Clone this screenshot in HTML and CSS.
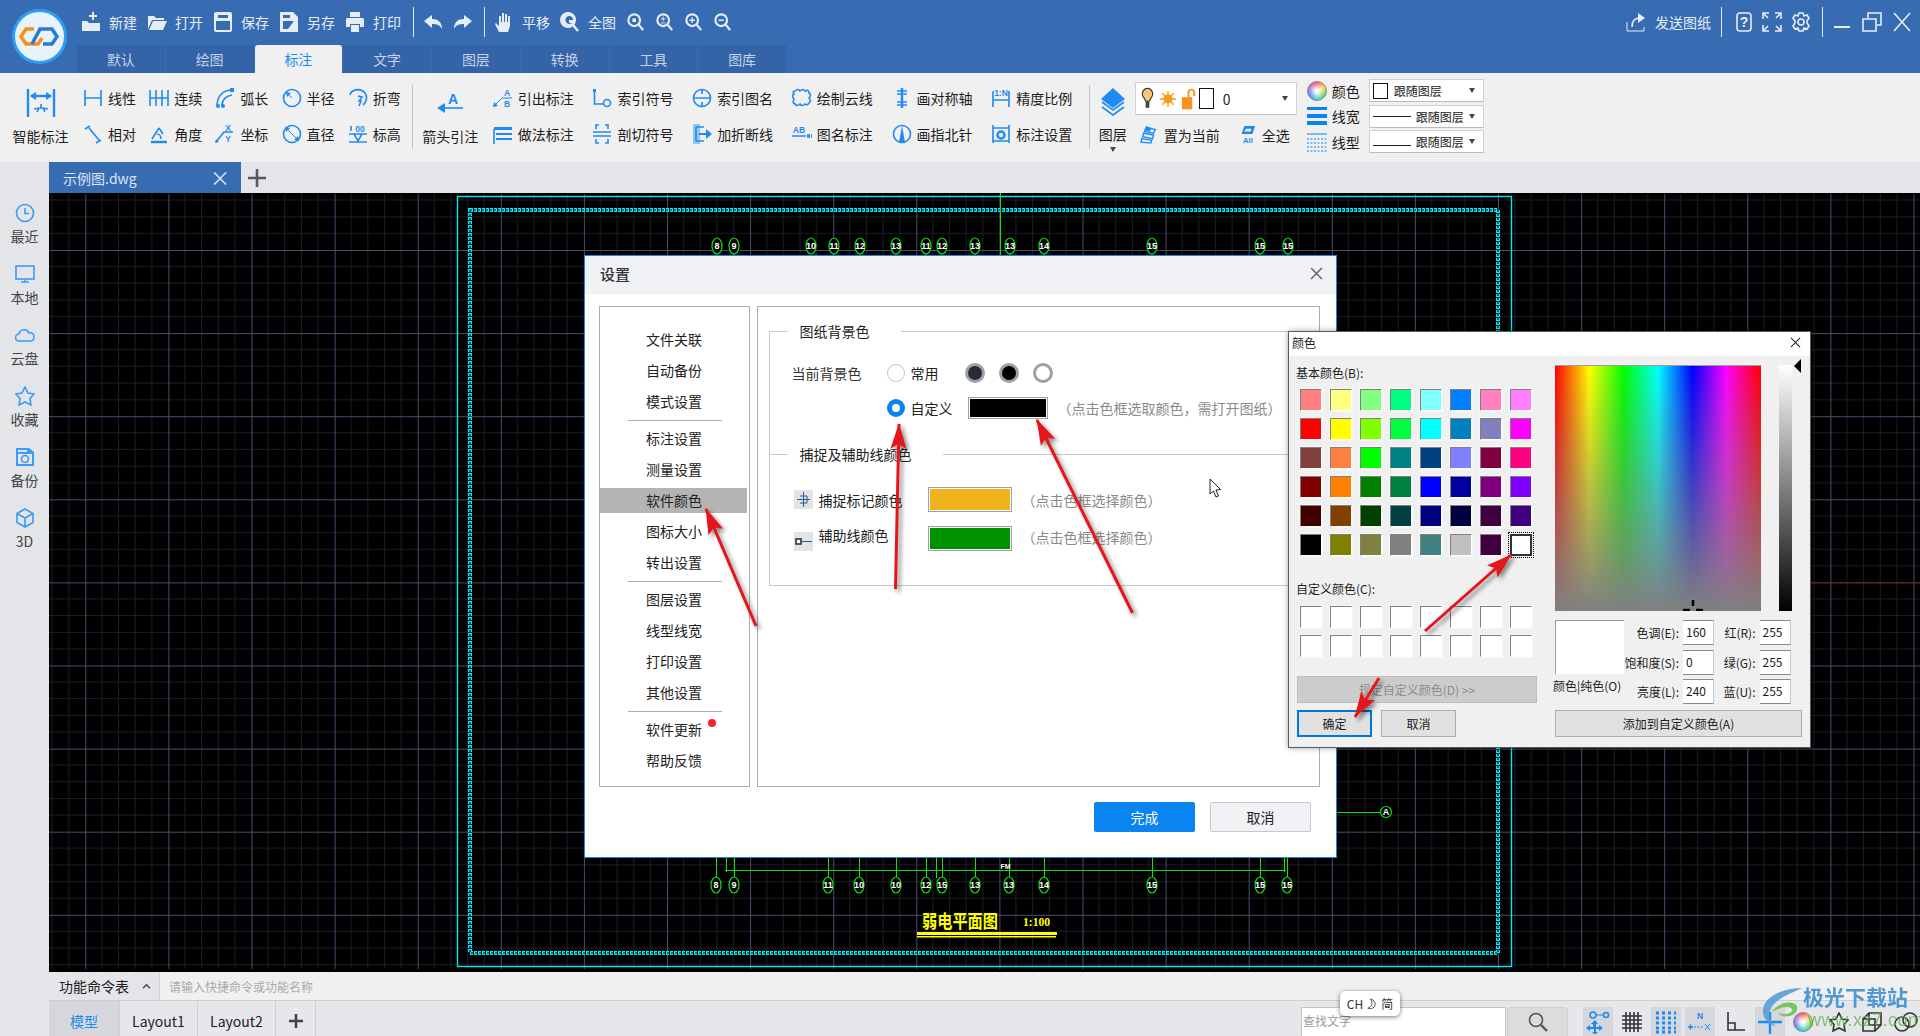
FILE: index.html
```html
<!DOCTYPE html>
<html lang="zh-CN">
<head>
<meta charset="utf-8">
<title>迅捷CAD 设置</title>
<link rel="stylesheet" href="styles.css">
</head>
<body>
<svg class="defs" width="0" height="0" aria-hidden="true">
<defs>
<symbol id="h-new" viewBox="0 0 20 20"><path class="f" d="M1 9h5l2 2h11v8H1z"/><path class="f" d="M8 3h3V0h2v3h3v2h-3v3h-2V5H8z"/></symbol>
<symbol id="h-open" viewBox="0 0 20 20"><path class="f" d="M1 4h6l2 2h8v2H5L1 17z"/><path class="f" d="M6 9h14l-4 9H2z"/></symbol>
<symbol id="h-save" viewBox="0 0 20 20"><path class="f" fill-rule="evenodd" d="M3 0h14a2 2 0 0 1 2 2v16a2 2 0 0 1-2 2H3a2 2 0 0 1-2-2V2a2 2 0 0 1 2-2zM3 9v9h14V9zM5 3v3h10V3z"/></symbol>
<symbol id="h-saveas" viewBox="0 0 20 20"><path class="f" fill-rule="evenodd" d="M1 0h13l5 5v15H1zM4 3v3h7V3zM4 9v8h5l6-8z"/><path class="f" d="M16 9l3 2-7 8h-3z"/></symbol>
<symbol id="h-print" viewBox="0 0 20 20"><path class="f" d="M5 0h10v5H5z"/><path class="f" fill-rule="evenodd" d="M2 6h16a2 2 0 0 1 1 2v7h-4v-3H5v3H1V8a2 2 0 0 1 1-2z"/><path class="f" d="M6 13h8v7H6z"/></symbol>
<symbol id="h-undo" viewBox="0 0 20 20"><path class="f" d="M9 3v4c6 0 10 3 10 10-2-4-5-5-10-5v4L1 9z"/></symbol>
<symbol id="h-redo" viewBox="0 0 20 20"><path class="f" d="M11 3v4C5 7 1 10 1 17c2-4 5-5 10-5v4l8-7z"/></symbol>
<symbol id="h-hand" viewBox="0 0 20 20"><path class="f" d="M5 20l-4-8 1-1 3 3V4h2v6h1V1h2v9h1V2h2v8h1V4h2v10l-2 6z"/></symbol>
<symbol id="h-all" viewBox="0 0 20 20"><path class="f" fill-rule="evenodd" d="M8 0a8 8 0 1 1 0 16A8 8 0 0 1 8 0zm1 4a4 4 0 1 0 3 7h-3V8h4a4 4 0 0 0-4-4z"/><path class="s3" d="M13 13l5 6"/></symbol>
<symbol id="h-zw" viewBox="0 0 20 20"><circle class="s3" cx="8" cy="8" r="6.5"/><rect class="f" x="6" y="6" width="4" height="4"/><path class="s3" d="M13 13l5 6"/></symbol>
<symbol id="h-zpm" viewBox="0 0 20 20"><circle class="s3" cx="8" cy="8" r="6.5"/><path class="s1" d="M5.500 6.500h5M8 4v5M5.500 11h5"/><path class="s3" d="M13 13l5 6"/></symbol>
<symbol id="h-zp" viewBox="0 0 20 20"><circle class="s3" cx="8" cy="8" r="6.500"/><path class="s2" d="M5 8h6M8 5v6"/><path class="s3" d="M13 13l5 6"/></symbol>
<symbol id="h-zm" viewBox="0 0 20 20"><circle class="s3" cx="8" cy="8" r="6.500"/><path class="s2" d="M5 8h6"/><path class="s3" d="M13 13l5 6"/></symbol>
<symbol id="h-send" viewBox="0 0 20 20"><path class="s1" d="M1 10v9h17v-4"/><path class="s2" d="M6 15c0-6 3-9 8-9"/><path class="f" d="M12 1l7 5-7 5z"/></symbol>
<symbol id="h-help" viewBox="0 0 20 20"><rect class="s2" x="3" y="1" width="14" height="18" rx="3"/><text class="gt" x="10" y="15">?</text></symbol>
<symbol id="h-full" viewBox="0 0 20 20"><path class="s2" d="M1 7V1h6M13 1h6v6M19 13v6h-6M7 19H1v-6M2 2l4 4M18 2l-4 4M18 18l-4-4M2 18l4-4"/></symbol>
<symbol id="h-gear" viewBox="0 0 20 20"><circle class="s2" cx="10" cy="10" r="3"/><path class="s2" d="M8 1h4l1 3 3-1 2 3-2 3v2l2 3-2 3-3-1-1 3H8l-1-3-3 1-2-3 2-3V9L2 6l2-3 3 1z"/></symbol>

<symbol id="t-smart" viewBox="0 0 30 30"><path class="s3" d="M2 1v28M28 1v28"/><path class="s3" d="M5 8h20"/><path class="f" d="M4 8l6-4v8zM26 8l-6-4v8z"/><path class="s2" d="M8 21l5-1-2 4M22 21l-5-1 2 4M15 16v5"/></symbol>
<symbol id="t-linear" viewBox="0 0 20 20"><path class="s2" d="M2 2v16M18 2v16M2 10h16"/></symbol>
<symbol id="t-cont" viewBox="0 0 20 20"><path class="s2" d="M1 2v16M7 2v16M13 2v16M19 2v16M1 10h18"/></symbol>
<symbol id="t-arc" viewBox="0 0 20 20"><path class="s2" d="M2 18C2 8 8 2 17 2M7 18C7 12 11 8 17 7"/><circle class="f" cx="3" cy="18" r="2"/><circle class="f" cx="8" cy="18" r="2"/><rect class="f" x="15" y="0" width="4" height="4"/></symbol>
<symbol id="t-rad" viewBox="0 0 20 20"><circle class="s2" cx="10" cy="10" r="8.500"/><path class="s1" d="M10 10L5 5"/><path class="f" d="M4 4l5 1-4 4z"/></symbol>
<symbol id="t-bend" viewBox="0 0 20 20"><path class="s2" d="M2 7C3 2 12 -1 17 5c3 4 1 10-2 12"/><path class="s2" d="M10 8l4 1-3 4 2 0-2 5"/></symbol>
<symbol id="t-rel" viewBox="0 0 20 20"><path class="s2" d="M6 4l10 12M2 5l5-3M13 19l5-3"/></symbol>
<symbol id="t-ang" viewBox="0 0 20 20"><path class="s3" d="M2 18h16"/><path class="s2" d="M3 15L10 4M10 4l4 6M8 10c2 0 4 2 4 5"/></symbol>
<symbol id="t-coord" viewBox="0 0 20 20"><text class="gt small" x="13" y="7">X</text><text class="gt small" x="13" y="18">Y</text><path class="s2" d="M1 18L9 8h9"/><path class="f" d="M0 19l1-4 3 3z"/></symbol>
<symbol id="t-dia" viewBox="0 0 20 20"><circle class="s2" cx="10" cy="10" r="8.500"/><path class="s1" d="M4 4l12 12"/><path class="f" d="M3 3l5 1-4 4zM17 17l-5-1 4-4z"/></symbol>
<symbol id="t-elev" viewBox="0 0 20 20"><text class="gt small" x="12" y="8">00</text><path class="s2" d="M1 10h18M1 18h18M6 10l4 7 4-7M3 2v5"/></symbol>
<symbol id="t-arrow" viewBox="0 0 26 20"><text class="gt big" x="16" y="11">A</text><path class="s2" d="M6 15h20"/><path class="f" d="M0 15l8-5v10z"/></symbol>
<symbol id="t-lead" viewBox="0 0 20 20"><text class="gt small" x="14" y="8">A</text><text class="gt small" x="14" y="19">B</text><path class="s1" d="M9 10h10M9 10L2 17"/><path class="f" d="M0 19l1-5 4 4z"/></symbol>
<symbol id="t-idx" viewBox="0 0 20 20"><rect class="f" x="1" y="1" width="3" height="3"/><path class="s2" d="M2.500 2v14h9"/><circle class="s2" cx="15" cy="15" r="3.500"/></symbol>
<symbol id="t-idxn" viewBox="0 0 20 20"><circle class="s2" cx="10" cy="10" r="8.500"/><path class="s2" d="M1 10h18M10 2v4M10 14v4"/></symbol>
<symbol id="t-cloud" viewBox="0 0 20 20"><path class="s2" d="M3 3q3-3 5 0q3-3 5 0q4-2 4 2q3 2 0 5q3 3 0 5q-2 3-4 1q-3 3-5 0q-3 3-5 0q-3-1-1-5q-3-3 0-5q-2-3 1-3z"/></symbol>
<symbol id="t-sym" viewBox="0 0 20 20"><path class="s3" d="M10 0v20"/><path class="s2" d="M5 3h10M5 6h10M5 14h10M5 17h10"/></symbol>
<symbol id="t-scale" viewBox="0 0 20 20"><path class="s2" d="M2 3v16M18 3v16M2 12h16"/><text class="gt small" x="10" y="8">1:N</text></symbol>
<symbol id="t-method" viewBox="0 0 20 20"><path class="s2" d="M1 5v15"/><path class="f" d="M1 3h18v3H1zM3 9h16v2H3zM3 14h16v2H3z"/></symbol>
<symbol id="t-cut" viewBox="0 0 20 20"><path class="s2" d="M1 8h18M1 12h18M7 1H4v4M13 1h3v4M7 19H4v-4M13 19h3v-4"/></symbol>
<symbol id="t-break" viewBox="0 0 20 20"><path class="f o5" d="M1 0h7v20H1z"/><path class="s2" d="M4 3h8M4 17h8M4 3v14"/><path class="f" d="M7 9h7V5l6 5-6 5v-4H7z"/></symbol>
<symbol id="t-nameab" viewBox="0 0 20 20"><text class="gt small" x="7" y="9">AB</text><path class="s2" d="M0 12h14M16 10v4M20 10v4"/><path class="f" d="M15 12l3-2v4z"/></symbol>
<symbol id="t-north" viewBox="0 0 20 20"><circle class="s2" cx="10" cy="10" r="8.500"/><path class="f" d="M10 2l3 16H7z"/></symbol>
<symbol id="t-dset" viewBox="0 0 20 20"><path class="s2" d="M2 1v18M18 1v18M2 4h16M2 17h16"/><circle class="s3" cx="10" cy="11" r="3.500"/></symbol>
<symbol id="t-layer" viewBox="0 0 28 28"><path class="f" d="M14 0l12 11-12 9L2 11z"/><path class="s2" d="M3 14l11 8 11-8M3 19l11 8 11-8"/></symbol>
<symbol id="t-setcur" viewBox="0 0 20 20"><path class="s2" d="M7 1l10 3-2 4-10-2zM4 8l11 2-1 4-11-2zM2 14l11 2-1 3-11-1z"/><path class="f" d="M7 1l6 2-2 3-5-1z"/></symbol>
<symbol id="t-allsel" viewBox="0 0 20 20"><path class="f" fill-rule="evenodd" d="M7 0h12l-3 9H4zM9 3l-2 3h7l1-3z"/><text class="gt small" x="11" y="19">All</text></symbol>
<symbol id="t-lw" viewBox="0 0 20 20"><path class="f" d="M0 1h20v3H0zM0 8h20v4H0zM0 15h20v4H0z"/></symbol>
<symbol id="t-lt" viewBox="0 0 20 20"><path class="s1" d="M0 2h20"/><path class="s1 dash" d="M0 7h20M0 11h20M0 15h20M0 19h20"/></symbol>

<symbol id="s-recent" viewBox="0 0 20 20"><circle class="s2" cx="10" cy="10" r="8.500"/><path class="s2" d="M10 5v5.500h4"/></symbol>
<symbol id="s-local" viewBox="0 0 20 20"><rect class="s2" x="1" y="2" width="18" height="13"/><path class="s2" d="M6 18h8M10 15v3"/></symbol>
<symbol id="s-cloud" viewBox="0 0 20 20"><path class="s2" d="M5 16H4a3.500 3.500 0 0 1 0-7c1-5 8-6 10-1 3-1 5 1 5 4s-2 4-4 4z"/></symbol>
<symbol id="s-star" viewBox="0 0 20 20"><path class="s2" d="M10 1l3 6 6 1-4 4.500 1 6.500-6-3-6 3 1-6.500L1 8l6-1z"/></symbol>
<symbol id="s-backup" viewBox="0 0 20 20"><path class="f" fill-rule="evenodd" d="M1 1h13l5 4v14H1zM3 3v2h9V3zM3 7v10h14V7z"/><circle class="s2" cx="10" cy="12" r="3.500"/></symbol>
<symbol id="s-3d" viewBox="0 0 20 20"><path class="s2" d="M10 1l8 4.500v9L10 19l-8-4.500v-9zM2 5.500l8 4.500 8-4.500M10 10v9"/></symbol>

<symbol id="b-snap" viewBox="0 0 24 24"><circle class="s2" cx="7" cy="5" r="3"/><circle class="s2" cx="20" cy="5" r="2.500"/><path class="s1" d="M10 5h8"/><path class="f" d="M9 10l3 4h-2v3h3v-2l4 3-4 3v-2h-3v3h2l-3 3-3-3h2v-3H4v2l-4-3 4-3v2h3v-3H5z"/></symbol>
<symbol id="b-grid" viewBox="0 0 20 20"><path class="s2" d="M4 0v20M8 0v20M12 0v20M16 0v20M0 4h20M0 8h20M0 12h20M0 16h20"/></symbol>
<symbol id="b-dots" viewBox="0 0 24 24"><path class="d" d="M2 3h20M2 8h20M2 13h20M2 18h20M2 22h20"/></symbol>
<symbol id="b-north" viewBox="0 0 24 24"><text class="gt small" x="12" y="9">N</text><path class="s2" d="M0 17h5M2.500 14.500v5"/><path class="s1 dash" d="M6 17h10"/><path class="s1" d="M17 14l5 6M22 14l-5 6"/></symbol>
<symbol id="b-corner" viewBox="0 0 20 20"><path class="s2" d="M2 0v18h17M2 11h7v7"/></symbol>
<symbol id="b-plus" viewBox="0 0 24 24"><path class="s3" d="M0 12h24M12 2v22"/></symbol>
<symbol id="b-star" viewBox="0 0 20 20"><path class="s2" d="M10 1l3 6 6 1-4 4.500 1 6.500-6-3-6 3 1-6.500L1 8l6-1z"/></symbol>
<symbol id="b-cube" viewBox="0 0 20 20"><path class="s2" d="M1 7h12v12H1zM1 7l6-6h12v12l-6 6M7 1v12h12"/></symbol>
<symbol id="b-sph" viewBox="0 0 24 20"><circle class="s2" cx="8" cy="12" r="7"/><circle class="s2" cx="16" cy="8" r="7"/></symbol>
<symbol id="b-search" viewBox="0 0 20 20"><circle class="s2" cx="8" cy="8" r="6.500"/><path class="s3" d="M13 13l6 6"/></symbol>
</defs>
</svg>

<div class="app">
  <header class="titlebar">
    <div class="logo">
      <svg viewBox="0 0 55 55" width="55" height="55"><circle class="logo-disc" cx="27.500" cy="27.500" r="26"/><path class="logo-o" d="M22 20h-8l-5 7.500 5 7.500h12l4-6"/><path class="logo-b" d="M20 35l8-15h12l5 7.500-5 7.500h-9"/></svg>
    </div>
    <div class="title-main">
      <div class="quick">
        <div class="qk"><svg class="ic20"><use href="#h-new"/></svg><span>新建</span></div>
        <div class="qk"><svg class="ic20"><use href="#h-open"/></svg><span>打开</span></div>
        <div class="qk"><svg class="ic20"><use href="#h-save"/></svg><span>保存</span></div>
        <div class="qk"><svg class="ic20"><use href="#h-saveas"/></svg><span>另存</span></div>
        <div class="qk"><svg class="ic20"><use href="#h-print"/></svg><span>打印</span></div>
        <i class="vsep"></i>
        <svg class="ic20 qb"><use href="#h-undo"/></svg>
        <svg class="ic20 qb"><use href="#h-redo"/></svg>
        <i class="vsep"></i>
        <div class="qk"><svg class="ic20"><use href="#h-hand"/></svg><span>平移</span></div>
        <div class="qk"><svg class="ic20"><use href="#h-all"/></svg><span>全图</span></div>
        <svg class="ic18 qz first"><use href="#h-zw"/></svg>
        <svg class="ic18 qz"><use href="#h-zpm"/></svg>
        <svg class="ic18 qz"><use href="#h-zp"/></svg>
        <svg class="ic18 qz"><use href="#h-zm"/></svg>
        <div class="win">
          <svg class="ic20"><use href="#h-send"/></svg><span class="send">发送图纸</span>
          <i class="vsep"></i>
          <svg class="ic20 w1"><use href="#h-help"/></svg>
          <svg class="ic20 w2"><use href="#h-full"/></svg>
          <svg class="ic20 w3"><use href="#h-gear"/></svg>
          <i class="vsep"></i>
          <i class="wmin"></i>
          <svg class="wbtn" viewBox="0 0 20 20"><path class="s2" d="M1 7h13v12H1zM6 6V1h13v12h-4"/></svg>
          <svg class="wbtn x" viewBox="0 0 20 20"><path class="s2" d="M2 1l16 18M18 1L2 19"/></svg>
        </div>
      </div>
      <nav class="ribbon-tabs">
        <span class="rt">默认</span><span class="rt">绘图</span><span class="rt on">标注</span><span class="rt">文字</span><span class="rt">图层</span><span class="rt">转换</span><span class="rt">工具</span><span class="rt">图库</span>
      </nav>
    </div>
  </header>

  <section class="toolbar">
    <div class="big b1"><svg class="ic30"><use href="#t-smart"/></svg><span>智能标注</span></div>
    <div class="tools t5">
      <div class="tool"><svg class="ic20"><use href="#t-linear"/></svg><span>线性</span></div>
      <div class="tool"><svg class="ic20"><use href="#t-cont"/></svg><span>连续</span></div>
      <div class="tool"><svg class="ic20"><use href="#t-arc"/></svg><span>弧长</span></div>
      <div class="tool"><svg class="ic20"><use href="#t-rad"/></svg><span>半径</span></div>
      <div class="tool"><svg class="ic20"><use href="#t-bend"/></svg><span>折弯</span></div>
      <div class="tool"><svg class="ic20"><use href="#t-rel"/></svg><span>相对</span></div>
      <div class="tool"><svg class="ic20"><use href="#t-ang"/></svg><span>角度</span></div>
      <div class="tool"><svg class="ic20"><use href="#t-coord"/></svg><span>坐标</span></div>
      <div class="tool"><svg class="ic20"><use href="#t-dia"/></svg><span>直径</span></div>
      <div class="tool"><svg class="ic20"><use href="#t-elev"/></svg><span>标高</span></div>
    </div>
    <i class="tsep s-a"></i>
    <div class="big b2"><svg class="ic-arrow"><use href="#t-arrow"/></svg><span>箭头引注</span></div>
    <div class="tools t6">
      <div class="tool"><svg class="ic20"><use href="#t-lead"/></svg><span>引出标注</span></div>
      <div class="tool"><svg class="ic20"><use href="#t-idx"/></svg><span>索引符号</span></div>
      <div class="tool"><svg class="ic20"><use href="#t-idxn"/></svg><span>索引图名</span></div>
      <div class="tool"><svg class="ic20"><use href="#t-cloud"/></svg><span>绘制云线</span></div>
      <div class="tool"><svg class="ic20"><use href="#t-sym"/></svg><span>画对称轴</span></div>
      <div class="tool"><svg class="ic20"><use href="#t-scale"/></svg><span>精度比例</span></div>
      <div class="tool"><svg class="ic20"><use href="#t-method"/></svg><span>做法标注</span></div>
      <div class="tool"><svg class="ic20"><use href="#t-cut"/></svg><span>剖切符号</span></div>
      <div class="tool"><svg class="ic20"><use href="#t-break"/></svg><span>加折断线</span></div>
      <div class="tool"><svg class="ic20"><use href="#t-nameab"/></svg><span>图名标注</span></div>
      <div class="tool"><svg class="ic20"><use href="#t-north"/></svg><span>画指北针</span></div>
      <div class="tool"><svg class="ic20"><use href="#t-dset"/></svg><span>标注设置</span></div>
    </div>
    <i class="tsep s-b"></i>
    <div class="layer-btn"><svg class="ic28"><use href="#t-layer"/></svg><span>图层</span><i class="caret"></i></div>
    <div class="layer-main">
      <div class="layer-combo">
        <svg class="bulb" viewBox="0 0 14 24"><path class="bulb-g" d="M7 1a6 6 0 0 1 4 10l-2 4H5l-2-4A6 6 0 0 1 7 1z"/><path class="bulb-b" d="M5 15h4v7H5z"/></svg>
        <svg class="sun" viewBox="0 0 20 20"><circle cx="10" cy="10" r="4.500"/><path d="M10 1v4M10 15v4M1 10h4M15 10h4M3.500 3.500l3 3M13.500 13.500l3 3M16.500 3.500l-3 3M6.500 13.500l-3 3"/></svg>
        <svg class="lock" viewBox="0 0 16 24"><path class="lock-b" d="M1 10h11v13H1z"/><path class="lock-s" d="M8 10V5a3 3 0 0 1 6 0v4"/></svg>
        <i class="lsq"></i><span class="zero">0</span><i class="caret end"></i>
      </div>
      <div class="layer-row">
        <div class="tool"><svg class="ic18"><use href="#t-setcur"/></svg><span>置为当前</span></div>
        <div class="tool sel"><svg class="ic18"><use href="#t-allsel"/></svg><span>全选</span></div>
      </div>
    </div>
    <div class="props">
      <div class="prop"><i class="wheel"></i><span>颜色</span><div class="combo"><i class="csq"></i><em class="c1">跟随图层</em><i class="caret end"></i></div></div>
      <div class="prop"><svg class="ic20 blue"><use href="#t-lw"/></svg><span>线宽</span><div class="combo"><i class="cline"></i><em>跟随图层</em><i class="caret end"></i></div></div>
      <div class="prop"><svg class="ic20 blue"><use href="#t-lt"/></svg><span>线型</span><div class="combo"><i class="cline low"></i><em>跟随图层</em><i class="caret end"></i></div></div>
    </div>
  </section>

  <div class="work">
    <aside class="side">
      <div class="side-item"><svg class="ic20"><use href="#s-recent"/></svg><span>最近</span></div>
      <div class="side-item"><svg class="ic20"><use href="#s-local"/></svg><span>本地</span></div>
      <div class="side-item"><svg class="ic20"><use href="#s-cloud"/></svg><span>云盘</span></div>
      <div class="side-item"><svg class="ic20"><use href="#s-star"/></svg><span>收藏</span></div>
      <div class="side-item"><svg class="ic20"><use href="#s-backup"/></svg><span>备份</span></div>
      <div class="side-item"><svg class="ic20"><use href="#s-3d"/></svg><span>3D</span></div>
    </aside>
    <main class="stage">
      <div class="filebar">
        <div class="filetab"><span>示例图.dwg</span><b>×</b></div>
        <svg class="fileplus" viewBox="0 0 20 20"><path d="M10 1v18M1 10h18"/></svg>
      </div>
      <svg class="canvas" viewBox="49 193 1871 779">
        <defs>
          <pattern id="grid" patternUnits="userSpaceOnUse" x="85.300" y="250" width="83.100" height="83.100">
            <path class="gminor" d="M16.620 0V83.100M33.240 0V83.100M49.860 0V83.100M66.480 0V83.100M0 16.620H83.100M0 33.240H83.100M0 49.860H83.100M0 66.480H83.100"/>
            <path class="gmajor" d="M.5 0V83.100M0 .5H83.100"/>
          </pattern>
        </defs>
        <rect x="49" y="193" width="1871" height="779" fill="#000"/>
        <rect x="49" y="194" width="1871" height="775" fill="url(#grid)"/>
        <path class="redline" d="M1811 582.500H1920"/>
        <rect class="frame" x="457.500" y="196.500" width="1054" height="770"/>
        <rect class="wave" x="470" y="210" width="1028" height="743"/>
        <rect class="wave2" x="470" y="210" width="1028" height="743"/>
        <path class="gl" d="M1000.500 193V255"/>
        <g class="axis">
          <path class="gl" d="M717 254v4M734 254v4M816 254v4M834 254v4M860 254v4M896 254v4M926 254v4M942 254v4M975 254v4M1010 254v4M1044 254v4M1152 254v4M1260 254v4M1288 254v4"/>
          <ellipse cx="717" cy="246" rx="5" ry="8"/><text x="717" y="249">8</text>
          <ellipse cx="734" cy="246" rx="5" ry="8"/><text x="734" y="249">9</text>
          <ellipse cx="811" cy="246" rx="5" ry="8"/><text x="811" y="249">10</text>
          <ellipse cx="834" cy="246" rx="5" ry="8"/><text x="834" y="249">11</text>
          <ellipse cx="860" cy="246" rx="5" ry="8"/><text x="860" y="249">12</text>
          <ellipse cx="896" cy="246" rx="5" ry="8"/><text x="896" y="249">13</text>
          <ellipse cx="926" cy="246" rx="5" ry="8"/><text x="926" y="249">11</text>
          <ellipse cx="942" cy="246" rx="5" ry="8"/><text x="942" y="249">12</text>
          <ellipse cx="975" cy="246" rx="5" ry="8"/><text x="975" y="249">13</text>
          <ellipse cx="1010" cy="246" rx="5" ry="8"/><text x="1010" y="249">13</text>
          <ellipse cx="1044" cy="246" rx="5" ry="8"/><text x="1044" y="249">14</text>
          <ellipse cx="1152" cy="246" rx="5" ry="8"/><text x="1152" y="249">15</text>
          <ellipse cx="1260" cy="246" rx="5" ry="8"/><text x="1260" y="249">15</text>
          <ellipse cx="1288" cy="246" rx="5" ry="8"/><text x="1288" y="249">15</text>

          <path class="gl" d="M716.500 858v20M726.500 858v14M734.500 858v20M828.500 858v20M859.500 858v20M896.500 858v20M926.500 858v20M936.500 858v20M942.500 858v20M975.500 858v20M1009.500 858v20M1044.500 858v20M1152.500 858v20M1260.500 858v20M1284.500 858v14M1287.500 858v20M725 870.500H1286"/>
          <ellipse cx="716" cy="885" rx="5" ry="8"/><text x="716" y="888">8</text>
          <ellipse cx="734" cy="885" rx="5" ry="8"/><text x="734" y="888">9</text>
          <ellipse cx="828" cy="885" rx="5" ry="8"/><text x="828" y="888">11</text>
          <ellipse cx="859" cy="885" rx="5" ry="8"/><text x="859" y="888">10</text>
          <ellipse cx="896" cy="885" rx="5" ry="8"/><text x="896" y="888">10</text>
          <ellipse cx="926" cy="885" rx="5" ry="8"/><text x="926" y="888">12</text>
          <ellipse cx="942" cy="885" rx="5" ry="8"/><text x="942" y="888">15</text>
          <ellipse cx="975" cy="885" rx="5" ry="8"/><text x="975" y="888">13</text>
          <ellipse cx="1009" cy="885" rx="5" ry="8"/><text x="1009" y="888">13</text>
          <ellipse cx="1044" cy="885" rx="5" ry="8"/><text x="1044" y="888">14</text>
          <ellipse cx="1152" cy="885" rx="5" ry="8"/><text x="1152" y="888">15</text>
          <ellipse cx="1260" cy="885" rx="5" ry="8"/><text x="1260" y="888">15</text>
          <ellipse cx="1287" cy="885" rx="5" ry="8"/><text x="1287" y="888">15</text>

          <path class="gl" d="M1337 812.500H1380"/>
          <circle cx="1386" cy="812" r="5.500"/><text x="1386" y="815">A</text>
          <text class="fm" x="1005.500" y="869">FM</text>
        </g>
        <text class="plan" x="922" y="928" textLength="76" lengthAdjust="spacingAndGlyphs">弱电平面图</text>
        <text class="scale" x="1023" y="926" textLength="27" lengthAdjust="spacingAndGlyphs">1:100</text>
        <path class="under" d="M917 932h140v3H917z"/>
        <path class="under" d="M917 936h139v1.500H917z"/>
      </svg>
      <div class="cmdbar">
        <div class="cmd-label"><span>功能命令表</span><svg class="chev" viewBox="0 0 10 8"><path d="M1 6l4-4 4 4"/></svg></div>
        <div class="cmd-input">请输入快捷命令或功能名称</div>
      </div>
      <div class="layoutbar">
        <div class="lt active">模型</div>
        <div class="lt">Layout1</div>
        <div class="lt">Layout2</div>
        <div class="lt plus"><svg viewBox="0 0 14 14" width="14" height="14"><path d="M7 0v14M0 7h14"/></svg></div>
        <div class="status">
          <div class="find">查找文字</div>
          <div class="find-btn"><svg class="ic20"><use href="#b-search"/></svg></div>
          <div class="st on st-snap"><svg class="ic24"><use href="#b-snap"/></svg></div>
          <div class="st st-grid"><svg class="ic20"><use href="#b-grid"/></svg></div>
          <div class="st on st-dots"><svg class="ic24"><use href="#b-dots"/></svg></div>
          <div class="st on st-north"><svg class="ic24"><use href="#b-north"/></svg></div>
          <div class="st st-corner"><svg class="ic20"><use href="#b-corner"/></svg></div>
          <div class="st on st-cross"><svg class="ic24"><use href="#b-plus"/></svg></div>
          <div class="st st-wheel"><i class="wheel"></i></div>
          <div class="st st-star"><svg class="ic20"><use href="#b-star"/></svg></div>
          <div class="st st-cube"><svg class="ic20"><use href="#b-cube"/></svg></div>
          <div class="st st-sph"><svg class="ic24"><use href="#b-sph"/></svg></div>
        </div>
      </div>
    </main>
  </div>

  <section class="settings">
    <div class="set-title"><span>设置</span><svg class="set-x" viewBox="0 0 12 12"><path d="M1 1l10 10M11 1L1 11"/></svg></div>
    <div class="set-body">
      <ul class="set-menu">
        <li>文件关联</li><li>自动备份</li><li>模式设置</li>
        <li class="msep"></li>
        <li>标注设置</li><li>测量设置</li><li class="cur">软件颜色</li><li>图标大小</li><li>转出设置</li>
        <li class="msep"></li>
        <li>图层设置</li><li>线型线宽</li><li>打印设置</li><li>其他设置</li>
        <li class="msep"></li>
        <li class="upd">软件更新</li><li>帮助反馈</li>
      </ul>
      <div class="set-panel">
        <div class="group">
          <div class="ghead h1"><span>图纸背景色</span></div>
          <div class="brow r1">
            <span class="blabel">当前背景色</span>
            <i class="radio"></i><span class="rtext">常用</span>
            <div class="presets"><i class="pdot d1"></i><i class="pdot d2"></i><i class="pdot d3"></i></div>
          </div>
          <div class="brow r2">
            <i class="radio checked"></i><span class="rtext">自定义</span>
            <i class="swatch bgc"></i>
            <span class="hint">（点击色框选取颜色，需打开图纸）</span>
          </div>
          <div class="ghead h2"><span>捕捉及辅助线颜色</span></div>
          <div class="crow c-a">
            <svg class="ci" viewBox="0 0 19 19"><rect class="ci-bg" width="19" height="19"/><path class="ci-l" d="M9.500 2v15M3 9.500h13M6 6h7v7H6"/></svg>
            <span class="ctext">捕捉标记颜色</span><i class="swatch orange"></i><span class="hint h3">（点击色框选择颜色）</span>
          </div>
          <div class="crow c-b">
            <svg class="ci" viewBox="0 0 19 19"><rect class="ci-bg" width="19" height="19"/><rect class="ci-k" x="2" y="7" width="5" height="5"/><path class="ci-l" d="M7 9.500h11"/></svg>
            <span class="ctext up">辅助线颜色</span><i class="swatch green"></i><span class="hint h3 h4">（点击色框选择颜色）</span>
          </div>
        </div>
      </div>
    </div>
    <div class="set-foot"><button class="ok">完成</button><button class="no">取消</button></div>
  </section>

  <section class="colordlg">
    <div class="cd-title"><span>颜色</span><svg class="cd-x" viewBox="0 0 12 12"><path d="M1 1l10 10M11 1L1 11"/></svg></div>
    <div class="cd-body">
      <div class="cd-left">
        <div class="cd-lab">基本颜色(B):</div>
        <div class="sw-grid">
          <i class="sw c-ff8080"></i><i class="sw c-ffff80"></i><i class="sw c-80ff80"></i><i class="sw c-00ff80"></i><i class="sw c-80ffff"></i><i class="sw c-0080ff"></i><i class="sw c-ff80c0"></i><i class="sw c-ff80ff"></i>
          <i class="sw c-ff0000"></i><i class="sw c-ffff00"></i><i class="sw c-80ff00"></i><i class="sw c-00ff40"></i><i class="sw c-00ffff"></i><i class="sw c-0080c0"></i><i class="sw c-8080c0"></i><i class="sw c-ff00ff"></i>
          <i class="sw c-804040"></i><i class="sw c-ff8040"></i><i class="sw c-00ff00"></i><i class="sw c-008080"></i><i class="sw c-004080"></i><i class="sw c-8080ff"></i><i class="sw c-800040"></i><i class="sw c-ff0080"></i>
          <i class="sw c-800000"></i><i class="sw c-ff8000"></i><i class="sw c-008000"></i><i class="sw c-008040"></i><i class="sw c-0000ff"></i><i class="sw c-0000a0"></i><i class="sw c-800080"></i><i class="sw c-8000ff"></i>
          <i class="sw c-400000"></i><i class="sw c-804000"></i><i class="sw c-004000"></i><i class="sw c-004040"></i><i class="sw c-000080"></i><i class="sw c-000040"></i><i class="sw c-400040"></i><i class="sw c-400080"></i>
          <i class="sw c-000000"></i><i class="sw c-808000"></i><i class="sw c-808040"></i><i class="sw c-808080"></i><i class="sw c-408080"></i><i class="sw c-c0c0c0"></i><i class="sw c-400040"></i><i class="sw c-ffffff picked"></i>
        </div>
        <div class="cd-lab l2">自定义颜色(C):</div>
        <div class="sw-grid custom">
          <i class="sw"></i><i class="sw"></i><i class="sw"></i><i class="sw"></i><i class="sw"></i><i class="sw"></i><i class="sw"></i><i class="sw"></i>
          <i class="sw"></i><i class="sw"></i><i class="sw"></i><i class="sw"></i><i class="sw"></i><i class="sw"></i><i class="sw"></i><i class="sw"></i>
        </div>
        <button class="wbt dis">规定自定义颜色(D) &gt;&gt;</button>
        <div class="cd-btns"><button class="wbt def">确定</button><button class="wbt">取消</button></div>
      </div>
      <div class="cd-right">
        <div class="pick">
          <div class="spectrum"><svg class="cross" viewBox="0 0 20 20"><path d="M10 0v6M0 10h7M13 10h7"/></svg></div>
          <div class="lum"><i class="lum-arrow"></i></div>
        </div>
        <div class="vals">
          <div class="prev-col"><div class="preview"></div><div class="prev-lab">颜色|纯色(O)</div></div>
          <div class="val-grid">
            <label>色调(E):</label><span class="val">160</span><label>红(R):</label><span class="val">255</span>
            <label>饱和度(S):</label><span class="val">0</span><label>绿(G):</label><span class="val">255</span>
            <label>亮度(L):</label><span class="val">240</span><label>蓝(U):</label><span class="val">255</span>
          </div>
        </div>
        <button class="wbt add">添加到自定义颜色(A)</button>
      </div>
    </div>
  </section>

  <svg class="marks" viewBox="0 0 1920 1036">
    <defs>
      <marker id="ah" markerUnits="userSpaceOnUse" markerWidth="26" markerHeight="18" refX="25" refY="9" orient="auto"><path class="ahead" d="M0 1L26 9 0 17 5 9z"/></marker>
    </defs>
    <g class="arrows">
      <path marker-end="url(#ah)" d="M756 626L706 509"/>
      <path marker-end="url(#ah)" d="M895.500 589L899 424"/>
      <path marker-end="url(#ah)" d="M1132.500 613L1037 420"/>
      <path marker-end="url(#ah)" d="M1425 631L1511 555"/>
      <path marker-end="url(#ah)" d="M1379 678L1355 717"/>
    </g>
    <path class="pointer" d="M1210 479v15l3.500-3 2.500 6 2.500-1-2.500-6 4.500-.5z"/>
  </svg>

  <div class="ime"><span>CH</span><svg class="moon" viewBox="0 0 12 14"><path d="M4 1c5 1 7 5 5 9-2 3-5 3-8 2 3-1 5-3 5-6 0-2-1-4-2-5z"/></svg><span>简</span></div>

  <div class="water">
    <svg class="swirl" viewBox="0 0 44 40"><path class="sw-b" d="M42 1C22 1 3 10 3 24c0 8 6 14 13 15C8 34 7 24 14 17 22 9 32 6 42 1z"/><path class="sw-g" d="M12 25c6-9 18-12 24-7 3 3 1 9-6 11-5 1-10 0-12-3 6 2 12 1 14-2 1-2-1-4-5-4-6 0-11 3-15 5z"/></svg>
    <div class="water-cn">极光下载站</div>
    <div class="water-en">www.xz7.com</div>
  </div>
</div>
</body>
</html>
```

FILE: styles.css
```css
* { box-sizing: border-box; }
html, body { margin: 0; padding: 0; background: #e3e5e9; overflow: hidden; }
body { font-family: "Noto Sans CJK SC", "Noto Sans", sans-serif; font-size: 14px; color: #222; }
.defs { position: absolute; }
i { font-style: normal; display: block; }
em { font-style: normal; }

/* shared svg primitives */
.f { fill: currentColor; stroke: none; }
.s1, .s2, .s3, .d { fill: none; stroke: currentColor; }
.s1 { stroke-width: 1; }
.s2 { stroke-width: 1.6; }
.s3 { stroke-width: 2.4; }
.dash { stroke-dasharray: 2 1.5; }
.o5 { opacity: .45; }
.d { stroke-width: 3; stroke-dasharray: 3 3; }
.gt { fill: currentColor; stroke: none; font-family: "Liberation Sans", sans-serif; font-weight: 700; font-size: 14px; text-anchor: middle; }
.gt.small { font-size: 8.5px; }
.gt.big { font-size: 14px; }
.ic18 { width: 18px; height: 18px; flex: none; }
.ic20 { width: 20px; height: 20px; flex: none; }
.ic24 { width: 24px; height: 24px; flex: none; }
.ic28 { width: 28px; height: 28px; flex: none; }
.ic30 { width: 30px; height: 30px; flex: none; }
.ic-arrow { width: 26px; height: 20px; flex: none; }

.app { position: relative; width: 1920px; height: 1036px; display: flex; flex-direction: column; overflow: hidden; }

/* title bar */
.titlebar { height: 73px; flex: none; display: flex; background: #376cb3; color: #e6edf6; }
.logo { width: 77px; flex: none; padding: 9px 0 0 12px; }
.logo-disc { fill: #e8f2fb; stroke: #2f9df6; stroke-width: 3; }
.logo-o, .logo-b { fill: none; stroke-width: 3.6; }
.logo-o { stroke: #f5901e; }
.logo-b { stroke: #2a7bd8; }
.title-main { flex: 1; display: flex; flex-direction: column; }
.quick { height: 45px; display: flex; align-items: center; padding: 0 0 1px 4px; }
.qk { display: flex; align-items: center; gap: 8px; width: 58px; margin-right: 8px; white-space: nowrap; font-size: 14px; }
.vsep { width: 1px; height: 30px; background: #dfe8f4; margin: 0 9px 0 2px; flex: none; }
.qb { margin: 0 10px 0 0; }
.qb + .vsep { margin-left: 1px; }
.qz { margin-right: 11px; }
.qz.first { margin-left: 1px; }
.win { margin-left: auto; display: flex; align-items: center; padding-right: 8px; }
.send { font-size: 14px; margin: 0 8px 0 9px; white-space: nowrap; }
.w1 { margin: 0 8px 0 3px; }
.w2 { margin-right: 9px; }
.w3 { margin-right: 9px; }
.wmin { width: 16px; height: 2px; background: #e6edf6; margin: 10px 12px 0 2px; }
.wbtn { width: 20px; height: 20px; margin-right: 10px; }
.wbtn.x { margin-right: 0; }
.ribbon-tabs { height: 28px; display: flex; gap: 1px; }
.rt { width: 87.750px; background: #3563a8; color: #c3d3e8; display: flex; align-items: center; justify-content: center; font-size: 14px; }
.rt.on { background: #f0f0f0; color: #1a8cf0; border-radius: 3px 3px 0 0; }

/* ribbon */
.toolbar { height: 89px; flex: none; background: #f0f0f0; display: flex; padding-left: 12px; color: #1f8bf2; }
.tool span, .big span, .layer-btn span, .prop span { color: #1c1c1c; white-space: nowrap; }
.big { width: 57px; flex: none; display: flex; flex-direction: column; align-items: center; font-size: 14px; }
.big.b1 { padding-top: 15px; }
.big.b1 span { margin-top: 8px; }
.big.b2 { padding-top: 20px; }
.big.b2 span { margin-top: 13px; }
.tools { display: grid; grid-template-rows: 20px 20px; row-gap: 16px; padding-top: 15px; }
.t5 { grid-template-columns: repeat(5, 53px); column-gap: 13.200px; margin-left: 14px; }
.t6 { grid-template-columns: repeat(6, 81px); column-gap: 18.700px; margin-left: 14px; }
.tool { display: flex; align-items: center; gap: 5px; font-size: 14px; }
.tsep { width: 1px; height: 64px; background: #c4c4c4; margin-top: 12px; flex: none; }
.s-a { margin: 12px 9px 0 11px; }
.s-b { margin: 12px 9px 0 16.500px; }
.layer-btn { width: 28px; flex: none; display: flex; flex-direction: column; align-items: center; padding-top: 15px; font-size: 14px; }
.layer-btn span { margin-top: 8px; line-height: 20px; }
.caret { width: 0; height: 0; border-left: 3.500px solid transparent; border-right: 3.500px solid transparent; border-top: 5px solid #444; margin-top: 3px; }
.layer-main { width: 162px; margin-left: 8px; flex: none; padding-top: 9px; }
.layer-combo { height: 33px; background: #fff; border: 1px solid #d0d0d0; border-bottom-color: #bdbdbd; border-radius: 1px; display: flex; align-items: center; padding-left: 5px; }
.bulb { width: 13px; height: 23px; }
.bulb-g { fill: #f7c873; stroke: #333; stroke-width: 1.2; }
.bulb-b { fill: #444; }
.sun { width: 18px; height: 18px; margin-left: 5px; fill: #f79a1b; stroke: #f79a1b; stroke-width: 1.5; }
.lock { width: 15px; height: 24px; margin-left: 4px; }
.lock-b { fill: #f7921a; }
.lock-s { fill: none; stroke: #f7921a; stroke-width: 2; }
.lsq { width: 15px; height: 21px; border: 1px solid #111; background: #fff; margin-left: 3px; }
.zero { margin-left: 9px; font-size: 14px; color: #222; }
.caret.end { margin: 0 8px 0 auto; }
.layer-row { display: flex; gap: 6px; margin-top: 10px; padding-left: 5px; }
.layer-row .tool { gap: 6px; height: 20px; }
.layer-row .tool.sel { margin-left: 12px; gap: 6px; }
.props { margin-left: 10px; padding-top: 6px; display: flex; flex-direction: column; gap: 2.500px; }
.prop { height: 23px; display: flex; align-items: center; gap: 5px; font-size: 14px; }
.wheel { width: 20px; height: 20px; border-radius: 50%; flex: none; border: 1px solid #888; background: radial-gradient(circle at 50% 50%, #fff 10%, transparent 65%), conic-gradient(#ff5c5c, #ffd24d, #66d95f, #4cd6d6, #5a8cf0, #c070e0, #ff5c5c); }
.blue { color: #0a84f0; }
.combo { width: 115px; height: 23px; margin-left: 4px; background: #fff; border: 1px solid #d0d0d0; border-bottom-color: #bbb; display: flex; align-items: center; padding-left: 3px; font-size: 12px; color: #222; white-space: nowrap; }
.csq { width: 15px; height: 16px; border: 1px solid #111; margin-right: 6px; flex: none; }
.cline { width: 38px; height: 1px; background: #222; margin-right: 5px; flex: none; }
.cline.low { margin-top: 8px; margin-bottom: 0; }
.combo em { font-size: 12px; }

/* workspace */
.work { flex: 1; min-height: 0; display: flex; }
.side { width: 49px; flex: none; background: #e3e5e9; padding-top: 41px; color: #3b9bf5; }
.side-item { height: 61px; display: flex; flex-direction: column; align-items: center; }
.side-item span { margin-top: 3px; line-height: 20px; font-size: 14px; color: #444; }
.stage { flex: 1; min-width: 0; display: flex; flex-direction: column; }
.filebar { height: 31px; flex: none; display: flex; align-items: center; }
.filetab { width: 192px; height: 31px; background: #376cb3; color: #dce6f3; display: flex; align-items: center; padding: 0 11px 0 14px; font-size: 14px; }
.filetab b { margin-left: auto; font-weight: 400; font-size: 20px; line-height: 1; }
.fileplus { width: 20px; height: 20px; margin-left: 6px; fill: none; stroke: #595959; stroke-width: 2.600; }
.canvas { width: 1871px; height: 779px; flex: none; display: block; background: #000; }
.gminor { stroke: #1d1d2b; stroke-width: 1; fill: none; }
.gmajor { stroke: #4a4c6b; stroke-width: 1; fill: none; }
.redline { stroke: #7c1616; stroke-width: 1; }
.frame { fill: none; stroke: #00e8f0; stroke-width: 1.4; }
.wave { fill: none; stroke: #00f0ff; stroke-width: 4; stroke-dasharray: 3 1; }
.wave2 { fill: none; stroke: #000; stroke-width: 1.200; stroke-dasharray: 2 2; }
.gl { stroke: #0ee40e; stroke-width: 1; fill: none; }
.axis ellipse, .axis circle { fill: #000; stroke: #0ee40e; stroke-width: 1.200; }
.axis text { fill: #fff; font-family: "Liberation Sans", sans-serif; font-weight: 700; font-size: 9px; text-anchor: middle; }
.axis text.fm { font-size: 7px; }
.plan { fill: #ffff00; font-family: "Noto Sans CJK SC", sans-serif; font-weight: 700; font-size: 18px; }
.scale { fill: #ffff00; font-family: "Liberation Serif", serif; font-weight: 700; font-size: 13px; }
.under { fill: #ffff00; }

.cmdbar { height: 29px; flex: none; display: flex; border-bottom: 1px solid #cfcfd2; background: #f0f0f0; }
.cmd-label { width: 111px; flex: none; background: #e3e5e9; border-right: 1px solid #cfcfd2; display: flex; align-items: center; padding-left: 10px; font-size: 14px; color: #1c1c1c; }
.chev { width: 9px; height: 7px; margin-left: 13px; fill: none; stroke: #555; stroke-width: 2; }
.cmd-input { flex: 1; display: flex; align-items: center; padding-left: 9px; font-size: 12px; color: #a9a9a9; }
.layoutbar { flex: 1; display: flex; background: #e5e7eb; }
.lt { width: 78px; height: 35px; flex: none; display: flex; align-items: center; justify-content: center; border-right: 1px solid #cfd0d4; font-size: 14px; color: #222; padding-top: 4px; }
.lt.active { width: 71px; background: #d5d7dc; color: #1a8cf0; }
.lt.plus { width: 40px; }
.lt.plus path { stroke: #444; stroke-width: 2.600; fill: none; }
.status { flex: 1; display: flex; padding: 6px 0 0 985px; align-items: stretch; }
.find { width: 205px; background: #fff; border: 1px solid #c4c4cb; border-bottom: 0; color: #9a9a9a; font-size: 12px; padding: 4px 0 0 1px; flex: none; }
.find-btn { width: 61px; margin-left: 1px; background: #dcdcdc; border: 1px solid #cfcfcf; border-bottom: 0; border-radius: 4px 4px 0 0; display: flex; align-items: center; justify-content: center; color: #555; flex: none; }
.st { display: flex; align-items: center; justify-content: center; flex: none; color: #333; }
.st.on { background: #d5d7dc; color: #1a8cf0; }
.st-snap { width: 30px; margin-left: 15px; }
.st-grid { width: 20px; margin-left: 9px; }
.st-dots { width: 30px; margin-left: 9px; }
.st-north { width: 30px; margin-left: 4px; }
.st-corner { width: 20px; margin-left: 11px; }
.st-cross { width: 30px; margin-left: 9px; }
.st-wheel { width: 20px; margin-left: 8px; }
.st-star { width: 20px; margin-left: 16px; }
.st-cube { width: 20px; margin-left: 13px; }
.st-sph { width: 26px; margin-left: 11px; }

/* settings dialog */
.settings { position: absolute; left: 584px; top: 255px; width: 753px; height: 603px; background: #fff; border: 1px solid #1a88e8; display: flex; flex-direction: column; }
.set-title { height: 38px; flex: none; background: #f0f2f5; display: flex; align-items: center; justify-content: space-between; padding: 0 13px 4px 15px; font-size: 15px; font-weight: 500; color: #333; }
.set-x { width: 13px; height: 13px; fill: none; stroke: #666; stroke-width: 1.400; }
.set-body { display: flex; gap: 6.500px; padding: 12px 16px 0 14px; height: 493px; flex: none; }
.set-menu { list-style: none; margin: 0; padding: 16.500px 0 0; width: 151px; height: 481px; flex: none; border: 1px solid #aeaeae; display: flex; flex-direction: column; }
.set-menu li { height: 25px; margin: 3px 0; line-height: 25px; padding-left: 46px; font-size: 14px; color: #222; flex: none; position: relative; margin-right: 2px; }
.set-menu li.msep { height: 1px; margin: 3px 27px 2px 28px; padding: 0; background: #aeaeae; }
.set-menu li.cur { background: #b4b4b4; }
.set-menu li.upd::after { content: ""; position: absolute; left: 108px; top: 2px; width: 8px; height: 8px; border-radius: 50%; background: #f0262b; }
.set-panel { flex: 1; height: 481px; border: 1px solid #aeaeae; padding: 24px 9px 0 11px; }
.group { border: 1px solid #c8c8c8; height: 255px; }
.ghead { height: 20px; display: flex; align-items: center; margin: 0 -1px; font-size: 14px; color: #222; }
.ghead.h1 { margin-top: -11px; padding-left: 19px; }
.ghead.h1 span { background: #fff; padding: 0 31px 0 12px; }
.ghead.h2 { margin-top: 24px; }
.ghead.h2::before { content: ""; width: 19px; height: 1px; background: #c8c8c8; }
.ghead.h2::after { content: ""; flex: 1; height: 1px; background: #c8c8c8; }
.ghead.h2 span { padding: 0 31px 0 12px; }
.brow { display: flex; align-items: center; height: 24px; font-size: 14px; }
.brow.r1 { margin-top: 20px; padding-left: 22px; }
.brow.r2 { margin-top: 11px; padding-left: 117px; }
.blabel { width: 95px; font-size: 14px; color: #333; flex: none; }
.radio { width: 18px; height: 18px; border-radius: 50%; background: #fff; border: 1.500px solid #c6c6c6; flex: none; }
.radio.checked { border: 5px solid #0a84f0; }
.rtext { margin-left: 6px; font-size: 14px; color: #222; }
.presets { display: flex; gap: 14px; margin-left: 26px; }
.pdot { width: 20px; height: 20px; border-radius: 50%; border: 3px solid #a0a0a0; }
.d1 { background: #262c35; }
.d2 { background: #000; }
.d3 { background: #fff; }
.swatch { display: block; flex: none; border: 1px solid #a0a0a0; box-shadow: inset 0 0 0 1px #fff; }
.bgc { width: 80px; height: 22px; background: #000; margin-left: 15px; }
.hint { font-size: 14px; color: #8a8a8a; white-space: nowrap; margin-left: 10px; }
.crow { display: flex; align-items: center; padding-left: 24px; }
.c-a { margin-top: 23px; height: 25px; }
.c-b { margin-top: 14px; height: 25px; }
.ci { width: 19px; height: 19px; flex: none; }
.c-b .ci { margin-top: 6px; }
.ci-bg { fill: #e3e3e3; }
.ci-l { stroke: #1f5c99; stroke-width: 1; fill: none; }
.ci-k { fill: #fff; stroke: #333; stroke-width: 1.600; }
.ctext { width: 109px; margin-left: 6px; font-size: 14px; color: #222; flex: none; }
.ctext.up { margin-top: -8px; }
.orange { width: 84px; height: 25px; background: #f0b21c; }
.green { width: 84px; height: 25px; background: #009300; }
.hint.h4 { margin-top: -3px; }
.set-foot { display: flex; justify-content: flex-end; gap: 15px; padding: 15px 25px 0 0; }
.set-foot button { width: 101px; height: 30px; font: inherit; font-size: 14px; border-radius: 2px; }
.ok { background: #0a84f0; color: #fff; border: 0; }
.no { background: #f0f2f5; color: #222; border: 1px solid #c8c8c8; }

/* color dialog */
.colordlg { position: absolute; left: 1288px; top: 331px; width: 523px; height: 417px; background: #f0f0f0; border: 1px solid #5a5a5a; box-shadow: 0 0 6px rgba(0,0,0,.35); font-size: 12px; color: #1c1c1c; }
.cd-title { height: 24px; background: #fff; display: flex; align-items: center; justify-content: space-between; padding: 0 9px 3px 3px; }
.cd-x { width: 11px; height: 11px; fill: none; stroke: #222; stroke-width: 1.100; }
.cd-body { display: flex; }
.cd-left { width: 266px; padding: 9px 0 0 7px; flex: none; }
.cd-lab { height: 16px; line-height: 16px; white-space: nowrap; }
.cd-lab.l2 { margin-top: 25px; }
.sw-grid { display: grid; grid-template-columns: repeat(8, 22px); grid-auto-rows: 22px; gap: 7px 8px; margin: 8px 0 0 4px; }
.sw-grid.custom { margin-top: 9px; }
.sw { display: block; background: #fff; border: 1px solid; border-color: #808080 #fff #fff #808080; box-shadow: 0 0 0 1px #f6f6f6; }
.c-ff8080{background:#ff8080}.c-ffff80{background:#ffff80}.c-80ff80{background:#80ff80}.c-00ff80{background:#00ff80}.c-80ffff{background:#80ffff}.c-0080ff{background:#0080ff}.c-ff80c0{background:#ff80c0}.c-ff80ff{background:#ff80ff}
.c-ff0000{background:#ff0000}.c-ffff00{background:#ffff00}.c-80ff00{background:#80ff00}.c-00ff40{background:#00ff40}.c-00ffff{background:#00ffff}.c-0080c0{background:#0080c0}.c-8080c0{background:#8080c0}.c-ff00ff{background:#ff00ff}
.c-804040{background:#804040}.c-ff8040{background:#ff8040}.c-00ff00{background:#00ff00}.c-008080{background:#008080}.c-004080{background:#004080}.c-8080ff{background:#8080ff}.c-800040{background:#800040}.c-ff0080{background:#ff0080}
.c-800000{background:#800000}.c-ff8000{background:#ff8000}.c-008000{background:#008000}.c-008040{background:#008040}.c-0000ff{background:#0000ff}.c-0000a0{background:#0000a0}.c-800080{background:#800080}.c-8000ff{background:#8000ff}
.c-400000{background:#400000}.c-804000{background:#804000}.c-004000{background:#004000}.c-004040{background:#004040}.c-000080{background:#000080}.c-000040{background:#000040}.c-400040{background:#400040}.c-400080{background:#400080}
.c-000000{background:#000000}.c-808000{background:#808000}.c-808040{background:#808040}.c-808080{background:#808080}.c-408080{background:#408080}.c-c0c0c0{background:#c0c0c0}.c-ffffff{background:#ffffff}
.sw.picked { border: 2px solid #333; outline: 1px dotted #000; outline-offset: 1px; box-shadow: none; }
.wbt { display: block; font: inherit; font-size: 12px; color: #1c1c1c; background: #e1e1e1; border: 1px solid #adadad; height: 27px; padding: 0; }
.wbt.dis { width: 240px; margin: 19px 0 0 1px; background: #cccccc; border-color: #bfbfbf; color: #8d8d8d; }
.cd-btns { display: flex; gap: 9px; margin: 7px 0 0 1px; }
.cd-btns .wbt { width: 75px; }
.wbt.def { border: 2px solid #0078d7; }
.cd-right { flex: 1; }
.pick { display: flex; gap: 18px; padding-top: 9px; }
.spectrum { position: relative; overflow: hidden; width: 206px; height: 246px; border-top: 1px solid #9c9c9c; background: linear-gradient(to bottom, rgba(128,128,128,0), #808080), linear-gradient(to right, #f00 0%, #ff0 16.700%, #0f0 33.300%, #0ff 50%, #00f 66.700%, #f0f 83.300%, #f00 100%); }
.cross { position: absolute; left: 128px; top: 234px; width: 20px; height: 20px; fill: none; stroke: #000; stroke-width: 2.500; }
.lum { position: relative; width: 13px; height: 246px; background: linear-gradient(to bottom, #fff, #000); }
.lum-arrow { position: absolute; left: 15px; top: -6px; width: 0; height: 0; border-top: 7px solid transparent; border-bottom: 7px solid transparent; border-right: 7px solid #000; }
.vals { display: flex; margin-top: 9px; }
.prev-col { width: 69px; flex: none; }
.preview { width: 69px; height: 54px; background: #fff; border-top: 1px solid #9c9c9c; border-left: 1px solid #9c9c9c; }
.prev-lab { margin-top: 4px; white-space: nowrap; line-height: 16px; margin-left: -2px; }
.val-grid { display: grid; grid-template-columns: 59px 31px 45.500px 31px; grid-template-rows: 25px 25px 25px; row-gap: 4.500px; }
.val-grid label { text-align: right; padding-right: 4px; line-height: 25px; white-space: nowrap; }
.val { background: #fff; border-top: 1px solid #8a8a8a; border-right: 1px solid #c8c8c8; border-bottom: 1px solid #8a8a8a; padding-left: 3px; font-size: 12px; line-height: 22px; color: #1c1c1c; }
.wbt.add { width: 247px; margin-top: 6px; }

/* annotation overlay */
.marks { position: absolute; left: 0; top: 0; width: 1920px; height: 1036px; pointer-events: none; }
.arrows path { stroke: #e8141c; stroke-width: 3; fill: none; filter: drop-shadow(3px 3px 2px rgba(0,0,0,.45)); }
.ahead { fill: #e8141c; stroke: none; }
.pointer { fill: #fff; stroke: #222; stroke-width: 1; }

.ime { position: absolute; left: 1340px; top: 991px; width: 60px; height: 25px; background: #fff; border-radius: 5px; box-shadow: 0 1px 4px rgba(0,0,0,.55); display: flex; align-items: center; justify-content: center; gap: 4px; font-size: 12px; color: #333; }
.moon { width: 10px; height: 12px; fill: none; stroke: #333; stroke-width: 1; }

.water { position: absolute; left: 1760px; top: 985px; width: 160px; height: 50px; pointer-events: none; }
.swirl { position: absolute; left: 0; top: 2px; width: 44px; height: 40px; opacity: .85; }
.sw-b { fill: #4f9bd8; }
.sw-g { fill: #6cbd4e; }
.water-cn { position: absolute; left: 43px; top: -2px; font-size: 21px; font-weight: 700; line-height: 26px; color: #3f8fd2; white-space: nowrap; opacity: .9; }
.water-en { position: absolute; left: 48px; top: 24px; font-family: "Liberation Sans", sans-serif; font-size: 18px; letter-spacing: .5px; line-height: 22px; color: #5fb24c; white-space: nowrap; opacity: .75; }
```
